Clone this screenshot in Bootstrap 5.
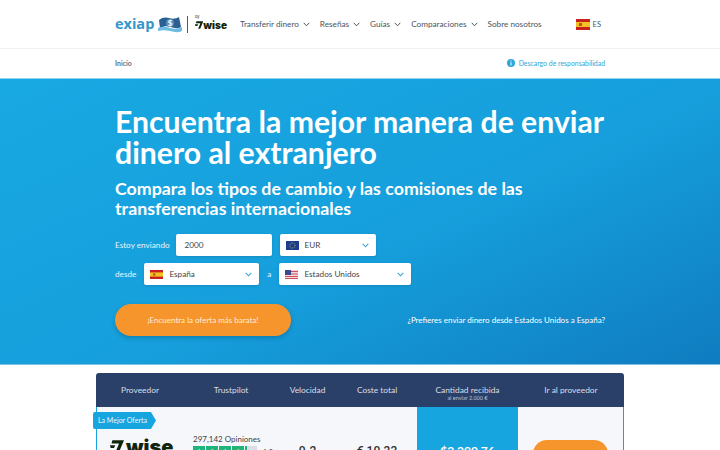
<!DOCTYPE html>
<html lang="es">
<head>
  <meta charset="UTF-8" />
  <title>Exiap</title>
  <link href="https://cdn.jsdelivr.net/npm/bootstrap@5.3.0/dist/css/bootstrap.min.css" rel="stylesheet" />
  <style>
    html, body { overflow: hidden; }
    body { font-family: Lato, "Liberation Sans", sans-serif; color: #3b4a5a; background: #fff; }
    .page-wrap { width: 490px; margin: 0 auto; }
    .top-nav { height: 49px; border-bottom: 1px solid #f0f2f4; padding-top: 1px; }
    .brand-name { font-family: "Open Sans", sans-serif; font-weight: 700; font-size: 14.5px; color: #3596c9; line-height: 1; width: 38px; }
    .brand-flag { margin-left: 5px; flex: none; }
    .brand-sep { width: 1px; height: 17px; background: #555; margin: 0 7px 0 5px; flex: none; }
    .wise-by { font-size: 4px; line-height: 1; color: #333; position: absolute; left: 0; top: -5px; font-weight: 400; }
    .wise-mark { font-family: Inter, "Liberation Sans", sans-serif; font-weight: 900; color: #10240c; line-height: 1; }
    .wise-small { font-size: 10px; position: relative; display: flex; align-items: center; width: 32px; }
    .menu-item { font-size: 8.2px; color: #4a5560; white-space: nowrap; display: flex; align-items: center; gap: 4px; }
    .menu-list { gap: 10px; margin-left: 13px; }
    .lang-box { font-size: 7.5px; color: #4a5560; gap: 3px; margin-right: 4px; }
    .crumb-bar { height: 29px; font-size: 6.9px; background: #fff; }
    .crumb-home { color: #66707a; font-weight: 700; }
    .crumb-note { color: #2fa6d8; }
    .hero-band { height: 287px; background: linear-gradient(155deg, #18a8e2 0%, #169fdc 55%, #0f7cc0 100%); color: #fff; padding-top: 27px; border-top: 1px solid #8ed4ee; border-bottom: 1px solid #7fbfe0; }
    .hero-title { font-size: 30.2px; font-weight: 700; line-height: 31px; margin: 0 0 10px; color: #fff; }
    .hero-sub { font-size: 17.8px; font-weight: 700; line-height: 20px; margin: 0 0 16px; color: #fff; }
    .form-line { font-size: 8.2px; color: #e6f5fc; height: 22px; margin-bottom: 7px; }
    .pick-box { height: 22px; background: #fff; border-radius: 2px; color: #444; font-size: 8.2px; padding: 0 6px; display: flex; align-items: center; box-shadow: 0 1px 3px rgba(0,0,0,.12); }
    .pick-box svg.flag-icon { margin-right: 6px; flex: none; }
    .pick-amount { width: 96px; margin-left: 6px; padding-left: 9px; }
    .pick-cur { width: 96px; margin-left: 8px; }
    .pick-from { width: 115px; margin-left: 8px; }
    .pick-to { width: 132px; }
    .word-a { width: 20px; text-align: center; }
    .pick-arrow { margin-left: auto; margin-right: 1px; }
    .cta-btn { width: 176px; height: 32px; background: #f7952d; border-radius: 16px; color: #fdeed9; font-size: 8px; border: 0; box-shadow: 0 2px 5px rgba(0,0,0,.2); padding: 0; }
    .cta-row { margin-top: 19px; }
    .swap-link { font-size: 8px; color: #fff; text-decoration: none; }
    .deal-wrap { width: 528px; margin: 8px auto 0; position: relative; }
    .deal-head { height: 34px; background: #2a4068; border-radius: 3px 3px 0 0; color: #d8dfe8; font-size: 8.4px; line-height: 12px; }
    .deal-body { height: 120px; background: #f5f7fb; border: solid #17a5e0; border-width: 0 1px; }
    .c-prov { width: 88px; flex: none; }
    .c-trust { width: 94px; flex: none; }
    .c-speed { width: 59px; flex: none; }
    .c-cost { width: 80px; flex: none; }
    .c-recv { width: 101px; flex: none; }
    .c-go { flex: 1; }
    .deal-head .c-recv { padding-top: 5.5px; }
    .deal-body .c-prov { width: 87px; }
    .recv-note { font-size: 5.5px; opacity: .8; line-height: 5.5px; }
    .recv-cell { background: #17a5e0; color: #fff; font-size: 12px; font-weight: 700; padding-top: 35px; }
    .best-tag { position: absolute; left: -3px; top: 39px; height: 17px; width: 63px; background: #17a5e0; color: #e8f6fc; font-size: 7px; line-height: 17px; padding-left: 5px; clip-path: polygon(0 0, 92% 0, 100% 50%, 92% 100%, 0 100%); border-radius: 2px 0 0 2px; }
    .num-cell { padding-top: 35px; color: #333; font-size: 12px; font-weight: 500; font-family: Roboto, sans-serif; }
    .wise-big { font-size: 20px; padding-top: 30px; padding-left: 13px; display: flex; align-items: flex-start; gap: 2px; }
    .wise-big svg { margin-top: 3px; flex: none; }
    .trust-text { font-size: 8px; color: #444; line-height: 1; padding-top: 28px; padding-left: 9px; }
    .trust-count { margin-bottom: 3px; }
    .star-box { width: 12px; height: 12px; background: #1fb57a; color: #fff; font-size: 9px; line-height: 12px; text-align: center; margin-right: 1px; }
    .star-off { background: linear-gradient(90deg, #1fb57a 20%, #dcdce6 20%); }
    .go-btn { width: 75px; height: 32px; background: #f7952d; border-radius: 14px; margin-top: 33px; }
  </style>
</head>
<body>

<nav class="top-nav d-flex align-items-center">
  <div class="page-wrap d-flex align-items-center">
    <span class="brand-name">exiap</span>
    <svg class="brand-flag" width="24" height="17" viewBox="0 0 24 17">
      <path d="M1 4c3-3 7-3 10-2s7 1 10-1l2 10c-3 2-7 1-10 0s-7-1-11 1z" fill="#2a5f92"/>
      <circle cx="12" cy="7" r="4" fill="#5d8fbd"/>
      <path d="M0 12c4-2 8-1 12 0s8 1 12-1v4c-4 2-8 1-12 0s-8-1-12 0z" fill="#6fbce2"/>
      <text x="12" y="10" font-size="8" font-weight="700" fill="#fff" text-anchor="middle" font-family="Lato">$</text>
    </svg>
    <span class="brand-sep"></span>
    <span class="wise-mark wise-small"><span class="wise-by">by</span>
      <svg class="me-0" width="9" height="8" viewBox="0 0 9 8"><path d="M1.500 0H9L5.600 8H3.400L5.800 2H1zM0 3.200h3.400L2.600 5H.4z" fill="#10240c"/></svg>wise</span>
    <div class="menu-list d-flex align-items-center">
      <span class="menu-item">Transferir dinero <svg width="7" height="5" viewBox="0 0 7 5"><path d="M.7.8 3.500 3.800 6.300.8" fill="none" stroke="#4a5560"/></svg></span>
      <span class="menu-item">Reseñas <svg width="7" height="5" viewBox="0 0 7 5"><path d="M.7.8 3.500 3.800 6.300.8" fill="none" stroke="#4a5560"/></svg></span>
      <span class="menu-item">Guías <svg width="7" height="5" viewBox="0 0 7 5"><path d="M.7.8 3.500 3.800 6.300.8" fill="none" stroke="#4a5560"/></svg></span>
      <span class="menu-item">Comparaciones <svg width="7" height="5" viewBox="0 0 7 5"><path d="M.7.8 3.500 3.800 6.300.8" fill="none" stroke="#4a5560"/></svg></span>
      <span class="menu-item">Sobre nosotros</span>
    </div>
    <div class="lang-box d-flex align-items-center ms-auto">
      <svg width="14" height="11" viewBox="0 0 14 11"><rect width="14" height="11" fill="#c8201f"/><rect y="3" width="14" height="5" fill="#f5c022"/><rect x="3" y="4" width="3" height="3" fill="#b5561f"/></svg>
      <span>ES</span>
    </div>
  </div>
</nav>

<div class="crumb-bar d-flex align-items-center">
  <div class="page-wrap d-flex justify-content-between align-items-center">
    <span class="crumb-home">Inicio</span>
    <span class="crumb-note d-flex align-items-center gap-1">
      <svg width="8" height="8" viewBox="0 0 8 8"><circle cx="4" cy="4" r="4" fill="#2fa6d8"/><rect x="3.500" y="3.400" width="1" height="3" fill="#fff"/><rect x="3.500" y="1.600" width="1" height="1" fill="#fff"/></svg>
      Descargo de responsabilidad
    </span>
  </div>
</div>

<section class="hero-band">
  <div class="page-wrap">
    <h1 class="hero-title">Encuentra la mejor manera de enviar dinero al extranjero</h1>
    <h2 class="hero-sub">Compara los tipos de cambio y las comisiones de las transferencias internacionales</h2>

    <div class="form-line d-flex align-items-center">
      <span>Estoy enviando</span>
      <div class="pick-box pick-amount">2000</div>
      <div class="pick-box pick-cur">
        <svg class="flag-icon" width="13" height="9" viewBox="0 0 13 9"><rect width="13" height="9" fill="#1d3d8f"/><circle cx="6.500" cy="4.500" r="2.600" fill="none" stroke="#e3c63a" stroke-width=".8" stroke-dasharray=".8 .9"/></svg>
        EUR
        <svg class="pick-arrow" width="7" height="5" viewBox="0 0 7 5"><path d="M.7.8 3.500 3.800 6.300.8" fill="none" stroke="#3aa4d4" stroke-width="1.100"/></svg>
      </div>
    </div>

    <div class="form-line d-flex align-items-center">
      <span>desde</span>
      <div class="pick-box pick-from">
        <svg class="flag-icon" width="13" height="9" viewBox="0 0 13 9"><rect width="13" height="9" fill="#c8201f"/><rect y="2.400" width="13" height="4.200" fill="#f5c022"/><rect x="3" y="3.400" width="2.400" height="2.200" fill="#b5561f"/></svg>
        España
        <svg class="pick-arrow" width="7" height="5" viewBox="0 0 7 5"><path d="M.7.8 3.500 3.800 6.300.8" fill="none" stroke="#3aa4d4" stroke-width="1.100"/></svg>
      </div>
      <span class="word-a">a</span>
      <div class="pick-box pick-to">
        <svg class="flag-icon" width="13" height="9" viewBox="0 0 13 9"><rect width="13" height="9" fill="#f0d8dc"/><path d="M0 1.500h13M0 4h13M0 6.500h13M0 8.500h13" stroke="#d0505c" stroke-width="1"/><rect width="6" height="5" fill="#3a4a8c"/></svg>
        Estados Unidos
        <svg class="pick-arrow" width="7" height="5" viewBox="0 0 7 5"><path d="M.7.8 3.500 3.800 6.300.8" fill="none" stroke="#3aa4d4" stroke-width="1.100"/></svg>
      </div>
    </div>

    <div class="cta-row d-flex justify-content-between align-items-center">
      <button class="btn cta-btn">¡Encuentra la oferta más barata!</button>
      <a class="swap-link" href="#">¿Prefieres enviar dinero desde Estados Unidos a España?</a>
    </div>
  </div>
</section>

<section class="deal-wrap">
  <div class="deal-head d-flex align-items-center text-center">
    <div class="c-prov">Proveedor</div>
    <div class="c-trust">Trustpilot</div>
    <div class="c-speed">Velocidad</div>
    <div class="c-cost">Coste total</div>
    <div class="c-recv">Cantidad recibida<div class="recv-note">al enviar 2.000 €</div></div>
    <div class="c-go">Ir al proveedor</div>
  </div>
  <div class="deal-body d-flex">
    <div class="c-prov wise-mark wise-big"><svg width="14" height="13" viewBox="0 0 9 8"><path d="M1.500 0H9L5.600 8H3.400L5.800 2H1zM0 3.200h3.400L2.600 5H.4z" fill="#10240c"/></svg>wise</div>
    <div class="c-trust trust-text">
      <div class="trust-count">297,142 Opiniones</div>
      <div class="d-flex align-items-center">
        <span class="star-box">★</span><span class="star-box">★</span><span class="star-box">★</span><span class="star-box">★</span><span class="star-box star-off">★</span>
        <span class="ms-1">4.3</span>
      </div>
    </div>
    <div class="c-speed num-cell text-center">0-2</div>
    <div class="c-cost num-cell text-center">€ 10.33</div>
    <div class="c-recv recv-cell text-center">$2,299.76</div>
    <div class="c-go d-flex justify-content-center"><div class="go-btn"></div></div>
  </div>
  <div class="best-tag">La Mejor Oferta</div>
</section>

<script src="https://cdn.jsdelivr.net/npm/bootstrap@5.3.0/dist/js/bootstrap.bundle.min.js"></script>
</body>
</html>
